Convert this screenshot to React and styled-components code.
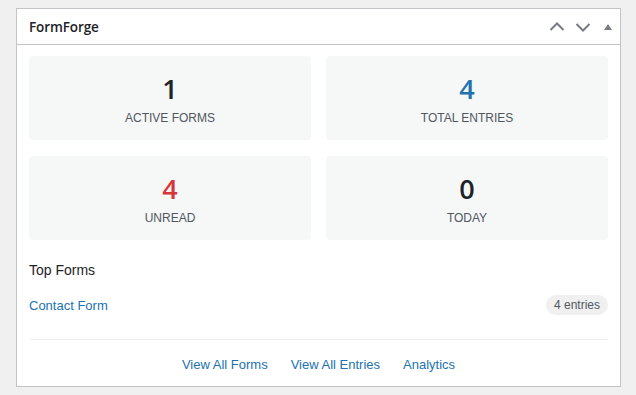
import React from 'react';
import styled, { createGlobalStyle } from 'styled-components';

const GlobalStyle = createGlobalStyle`
  html, body {
    margin: 0;
    background: #f0f0f1;
    font-family: "Liberation Sans", Arial, sans-serif;
    color: #1d2327;
  }
`;

const Page = styled.div`
  padding: 8px 15px 8px 16px;
  width: 636px;
  box-sizing: border-box;
`;

const Widget = styled.div`
  background: #fff;
  border: 1px solid #c3c4c7;
  height: 379px;
  box-sizing: border-box;
  display: flex;
  flex-direction: column;
`;

const Header = styled.div`
  height: 35px;
  border-bottom: 1px solid #c3c4c7;
  display: flex;
  align-items: center;
  padding-left: 12px;
`;

const Title = styled.h2`
  flex: 1;
  margin: 0;
  font-family: "Open Sans", "Liberation Sans", sans-serif;
  font-size: 13.5px;
  font-weight: 600;
  letter-spacing: -0.1px;
`;

const HandleButton = styled.button`
  width: ${p => (p.narrow ? '24px' : '26px')};
  height: 35px;
  padding: 0;
  border: 0;
  background: none;
  display: flex;
  align-items: center;
  justify-content: center;
  color: #787c82;
  cursor: pointer;
`;

const Body = styled.div`
  padding: 11px 12px 0;
  display: flex;
  flex-direction: column;
  flex: 1;
`;

const StatsGrid = styled.div`
  display: grid;
  grid-template-columns: 1fr 1fr;
  gap: 16px 15px;
`;

const StatCard = styled.div`
  background: #f6f7f7;
  border-radius: 4px;
  height: 84px;
  display: flex;
  flex-direction: column;
  align-items: center;
  justify-content: center;
`;

const StatNumber = styled.div`
  font-family: "Open Sans", "Liberation Sans", sans-serif;
  font-size: 27px;
  line-height: 32px;
  font-weight: 600;
  margin-top: 1px;
  color: ${p => p.color || '#1d2327'};
`;

const StatLabel = styled.div`
  margin-top: 6px;
  font-size: 12px;
  color: #50575e;
  text-transform: uppercase;
`;

const SectionTitle = styled.h3`
  margin: 21px 0 0;
  font-size: 14px;
  font-weight: 400;
  line-height: 18px;
`;

const FormRow = styled.div`
  margin-top: 16px;
  display: flex;
  align-items: center;
  justify-content: space-between;
  padding-bottom: 24px;
  border-bottom: 1px solid #f0f0f1;
`;

const Link = styled.a`
  color: #2271b1;
  font-size: 13px;
  text-decoration: none;
`;

const Badge = styled.span`
  background: #f0f0f1;
  color: #50575e;
  font-size: 12px;
  border-radius: 10px;
  padding: 3px 8px;
  line-height: 14px;
`;

const Footer = styled.div`
  display: flex;
  justify-content: center;
  gap: 23px;
  padding-top: 17px;
`;

const Chevron = ({ up }) => (
  <svg width="16" height="16" viewBox="0 0 16 16" fill="none" stroke="currentColor" strokeWidth="2">
    <path d={up ? 'M1.5 11 L8 4.5 L14.5 11' : 'M1.5 5 L8 11.5 L14.5 5'} />
  </svg>
);

const Triangle = () => (
  <svg width="10" height="8" viewBox="0 0 10 8" fill="currentColor">
    <path d="M5 1 L9 7 L1 7 Z" />
  </svg>
);

const stats = [
  { value: 1, label: 'Active Forms' },
  { value: 4, label: 'Total Entries', color: '#2271b1' },
  { value: 4, label: 'Unread', color: '#d63638' },
  { value: 0, label: 'Today' },
];

const App = () => {
  return (
    <Page>
      <GlobalStyle />
      <Widget>
        <Header>
          <Title>FormForge</Title>
          <HandleButton aria-label="Move up"><Chevron up /></HandleButton>
          <HandleButton aria-label="Move down"><Chevron /></HandleButton>
          <HandleButton narrow aria-label="Toggle panel"><Triangle /></HandleButton>
        </Header>
        <Body>
          <StatsGrid>
            {stats.map(s => (
              <StatCard key={s.label}>
                <StatNumber color={s.color}>{s.value}</StatNumber>
                <StatLabel>{s.label}</StatLabel>
              </StatCard>
            ))}
          </StatsGrid>
          <SectionTitle>Top Forms</SectionTitle>
          <FormRow>
            <Link href="#">Contact Form</Link>
            <Badge>4 entries</Badge>
          </FormRow>
          <Footer>
            <Link href="#">View All Forms</Link>
            <Link href="#">View All Entries</Link>
            <Link href="#">Analytics</Link>
          </Footer>
        </Body>
      </Widget>
    </Page>
  );
};

export default App;
